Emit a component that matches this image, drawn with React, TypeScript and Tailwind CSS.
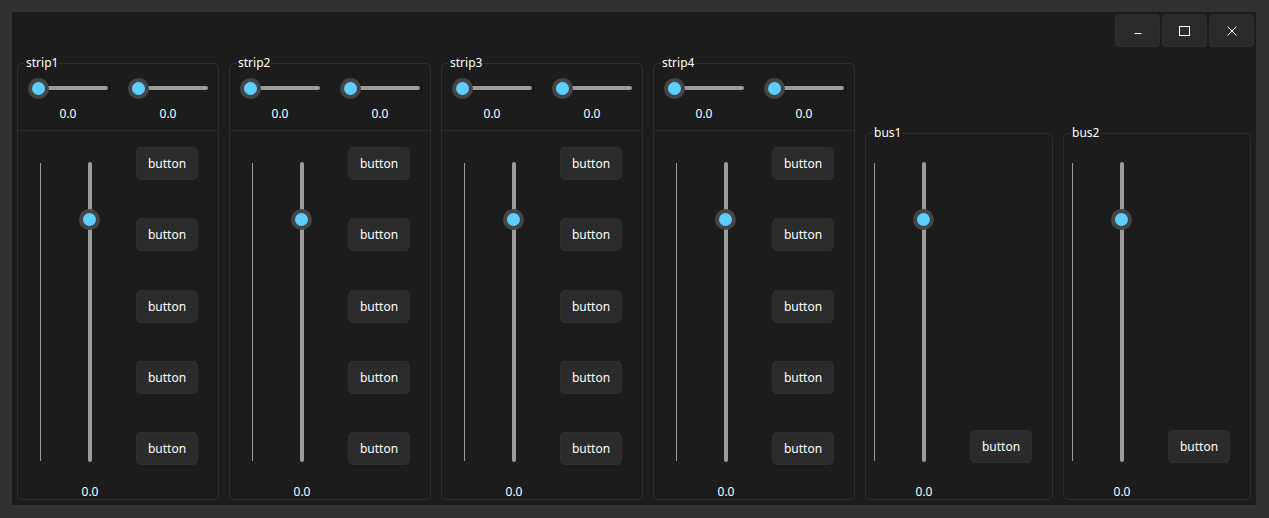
import React from "react";

const font = { fontFamily: '"Noto Sans", "Open Sans", sans-serif' };

function Handle() {
  return (
    <div className="w-[21px] h-[21px] rounded-full bg-[#454545] flex items-center justify-center">
      <div className="w-[13px] h-[13px] rounded-full bg-[#60cdff]" />
    </div>
  );
}

function HSlider() {
  return (
    <div className="flex flex-col items-center w-[80px]">
      <div className="relative w-[80px] h-[22px] flex items-center">
        <div className="ml-[10px] w-[70px] h-[4px] rounded-full bg-[#9b9b9b]" />
        <div className="absolute left-0 top-[0.5px]">
          <Handle />
        </div>
      </div>
      <div className="mt-[7px] h-[16px] leading-[16px] text-[12px] text-white">0.0</div>
    </div>
  );
}

function VSlider() {
  return (
    <div className="flex flex-col items-center w-[22px]">
      <div className="relative w-[22px] h-[300px]">
        <div className="absolute left-[9px] top-0 w-[4px] h-[300px] rounded-full bg-[#9b9b9b]" />
        <div className="absolute left-0 top-[47px]">
          <Handle />
        </div>
      </div>
      <div className="mt-[22px] h-[15px] leading-[16px] text-[12px] text-white">0.0</div>
    </div>
  );
}

function Btn() {
  return (
    <div className="w-[62px] h-[33px] pt-[1px] rounded-[5px] bg-[#2b2b2b] border border-[#303030] flex items-center justify-center text-[12px] text-white">
      button
    </div>
  );
}

function Label({ text }: { text: string }) {
  return (
    <div className="absolute -top-[9px] left-[7px] px-[1px] bg-[#1c1c1c] h-[16px] leading-[16px] text-[12px] text-white">
      {text}
    </div>
  );
}

function Strip({ name }: { name: string }) {
  return (
    <div className="relative w-[202px] h-[437px] border border-[#2f2f2f] rounded-[5px] flex flex-col">
      <Label text={name} />
      <div className="h-[67px] pt-[13px] px-[10px] flex justify-between border-b border-[#2f2f2f]">
        <HSlider />
        <HSlider />
      </div>
      <div className="flex-1 flex items-end pl-[22px]">
        <div className="w-px h-[298px] bg-[#9b9b9b] mb-[38px]" />
        <div className="ml-[38px]">
          <VSlider />
        </div>
        <div className="ml-[35px] mb-[34px] h-[318px] flex flex-col justify-between">
          <Btn />
          <Btn />
          <Btn />
          <Btn />
          <Btn />
        </div>
      </div>
    </div>
  );
}

function Bus({ name }: { name: string }) {
  return (
    <div className="relative w-[188px] h-[367px] border border-[#2f2f2f] rounded-[5px] flex flex-col">
      <Label text={name} />
      <div className="flex-1 flex items-end pl-[8px]">
        <div className="w-px h-[298px] bg-[#9b9b9b] mb-[38px]" />
        <div className="ml-[38px]">
          <VSlider />
        </div>
        <div className="ml-[35px] mb-[36px]">
          <Btn />
        </div>
      </div>
    </div>
  );
}

function TitleBtn({ children }: { children: React.ReactNode }) {
  return (
    <div className="w-[45px] h-[33px] rounded-[4px] bg-[#2b2b2b] border border-[#303030] flex items-center justify-center">
      {children}
    </div>
  );
}

export default function App() {
  return (
    <div className="w-[1269px] h-[518px] bg-[#313131] pt-[12px] pl-[12px]" style={font}>
      <div className="w-[1244px] h-[493px] bg-[#1c1c1c] flex flex-col">
        <div className="flex justify-end gap-[2px] pt-[2px] pr-[2px]">
          <TitleBtn>
            <svg width="10" height="10" viewBox="0 0 10 10" className="mt-[1px]">
              <line x1="1.5" y1="7.5" x2="8.5" y2="7.5" stroke="#ffffff" strokeWidth="1" />
            </svg>
          </TitleBtn>
          <TitleBtn>
            <svg width="11" height="10" viewBox="0 0 11 10">
              <rect x="0.5" y="0.5" width="10" height="9" fill="none" stroke="#ffffff" strokeWidth="1" />
            </svg>
          </TitleBtn>
          <TitleBtn>
            <svg width="10" height="10" viewBox="0 0 10 10">
              <line x1="0.5" y1="0.5" x2="9.5" y2="9.5" stroke="#ffffff" strokeWidth="1" />
              <line x1="9.5" y1="0.5" x2="0.5" y2="9.5" stroke="#ffffff" strokeWidth="1" />
            </svg>
          </TitleBtn>
        </div>
        <div className="flex-1 flex items-end gap-[10px] px-[5px] pb-[5px]">
          <Strip name="strip1" />
          <Strip name="strip2" />
          <Strip name="strip3" />
          <Strip name="strip4" />
          <Bus name="bus1" />
          <Bus name="bus2" />
        </div>
      </div>
    </div>
  );
}
